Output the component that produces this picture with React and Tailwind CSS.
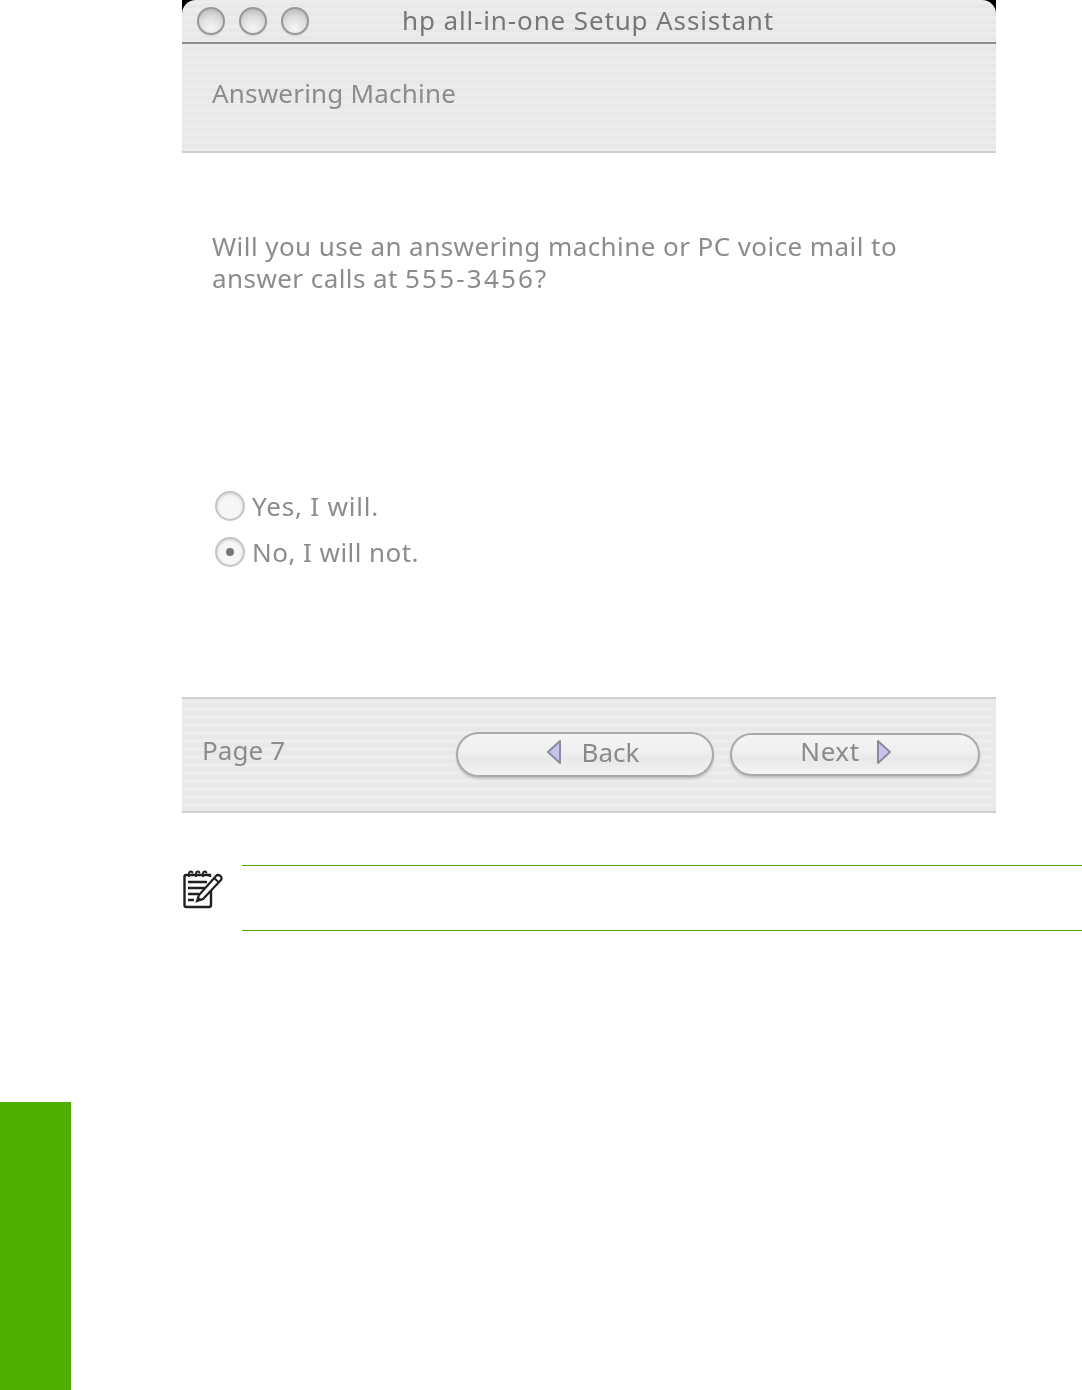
const stripes = "bg-[repeating-linear-gradient(180deg,#ececec_0px,#ececec_4px,#e8e8e8_4px,#e8e8e8_8px)]";

function TrafficLight() {
  return (
    <div className="w-[28px] h-[28px] rounded-full border-2 border-[#989898] bg-[radial-gradient(circle_at_50%_80%,#f6f6f6_0%,#dedede_50%,#aeaeae_100%)] shadow-[0_1px_1px_#cfcfcf]" />
  );
}

function Radio({ checked, label, className }) {
  return (
    <div className="flex items-center h-[46px]">
      <div className="w-[30px] h-[30px] ml-[3px] rounded-full border-2 border-[#c4c4c4] bg-[#f6f6f6] shadow-[inset_0_1px_3px_#d0d0d0] flex items-center justify-center">
        {checked && <div className="w-[8px] h-[8px] rounded-full bg-[#777777]" />}
      </div>
      <span className={`ml-[7px] text-[26px] text-[#8c8c8c] ${className}`}>{label}</span>
    </div>
  );
}

function Arrow({ dir }) {
  return (
    <svg width="16" height="26" viewBox="0 0 16 26">
      <path
        d={dir === "left" ? "M14 2 L14 24 L2 13 Z" : "M2 2 L2 24 L14 13 Z"}
        fill="#c6c4ec"
        stroke="#8b8b9e"
        strokeWidth="2"
        strokeLinejoin="round"
      />
    </svg>
  );
}

function NoteIcon() {
  return (
    <svg width="40" height="40" viewBox="0 0 40 40" fill="none" stroke="#231f20" strokeWidth="2.4">
      <path d="M27 7 L27 5 L3 5 Q1.5 5 1.5 6.5 L1.5 35 Q1.5 37 3.5 37 L26 37 Q28 37 28 35 L28 19" />
      <path d="M6 7 V3 Q6 1.5 8 1.5 Q9.5 1.5 9.5 3.5 M13 7 V3 Q13 1.5 15 1.5 Q16.5 1.5 16.5 3.5 M20 7 V3 Q20 1.5 22 1.5 Q23.5 1.5 23.5 3.5" strokeWidth="1.8" />
      <path d="M5 12 H24 M5 18 H22 M5 24 H16 M5 30 H11" strokeWidth="2.6" />
      <path d="M14 31 L16 25 L33 6 Q35 4 37.5 6 Q39.5 8.5 37.5 10.5 L20 29 Z" fill="#ffffff" strokeWidth="2.2" />
      <path d="M14 31 L15 27 L18 29.5 Z" fill="#231f20" strokeWidth="1" />
      <path d="M31 8 L36 12.5" strokeWidth="1.8" />
    </svg>
  );
}

function NavButton({ className, children }) {
  return (
    <div className={`flex items-center justify-center pb-[5px] rounded-full border-2 border-[#a9a9a9] bg-[linear-gradient(180deg,#f4f4f4_0%,#efefef_45%,#e8e8e8_60%,#f3f3f3_100%)] shadow-[0_2px_2px_#c2c2c2] text-[26px] tracking-[0.6px] text-[#8a8a8a] ${className}`}>
      {children}
    </div>
  );
}

export default function App() {
  return (
    <div className="w-[1082px] h-[1390px] bg-white overflow-hidden font-['Noto_Sans',sans-serif]">
      {/* Setup assistant window */}
      <div className="ml-[182px] w-[814px] [filter:blur(0.7px)]">
        {/* Title bar sits on black so the corners show */}
        <div className="bg-[linear-gradient(90deg,#000_0px,#000_14px,transparent_14px,transparent_800px,#000_800px)]">
          <div className={`h-[42px] rounded-t-[14px] ${stripes} flex items-center`}>
            <div className="flex gap-[14px] ml-[15px]">
              <TrafficLight />
              <TrafficLight />
              <TrafficLight />
            </div>
            <span className="ml-[93px] -mt-[2px] text-[26px] tracking-[0.87px] text-[#777777] leading-none">hp all-in-one Setup Assistant</span>
          </div>
        </div>
        <div className={`h-[111px] border-t-2 border-b-2 border-t-[#8f8f8f] border-b-[#cfcfcf] ${stripes} flex items-center pl-[30px]`}>
          <span className="text-[26px] tracking-[0.2px] text-[#8c8c8c] -mt-[8px]">Answering Machine</span>
        </div>

        {/* Question and radios */}
        <div className="h-[544px] pl-[30px] pt-[77px]">
          <p className="text-[26px] leading-[32px] tracking-[0.43px] text-[#8c8c8c]">
            Will you use an answering machine or PC voice mail to<br />answer calls at <span className="tracking-[2.2px]">555-3456?</span>
          </p>
          <div className="mt-[189px]">
            <Radio label="Yes, I will." className="tracking-[0.8px]" />
            <Radio checked label="No, I will not." className="tracking-[0.45px]" />
          </div>
        </div>

        {/* Footer bar */}
        <div className={`h-[116px] border-t-2 border-b-2 border-[#cfcfcf] ${stripes} flex items-center pl-[20px]`}>
          <span className="w-[254px] text-[26px] tracking-[0.1px] text-[#8c8c8c] -mt-[10px]">Page 7</span>
          <NavButton className="w-[258px] h-[45px] gap-[20px] pl-[15px] -mt-px">
            <Arrow dir="left" />
            <span className="tracking-[0px]">Back</span>
          </NavButton>
          <NavButton className="w-[250px] h-[43px] ml-[16px] gap-[16px] pr-[18px] -mt-[2px]">
            <span>Next</span>
            <Arrow dir="right" />
          </NavButton>
        </div>
      </div>

      {/* Note block */}
      <div className="flex ml-[182px] mt-[52px]">
        <div className="w-[60px] pt-[5px] pl-px">
          <NoteIcon />
        </div>
        <div className="flex-1 h-[66px] border-t border-b border-[#4fae00]" />
      </div>

      {/* Green chapter tab */}
      <div className="mt-[171px] w-[71px] h-[288px] bg-[#4fae00]" />
    </div>
  );
}
